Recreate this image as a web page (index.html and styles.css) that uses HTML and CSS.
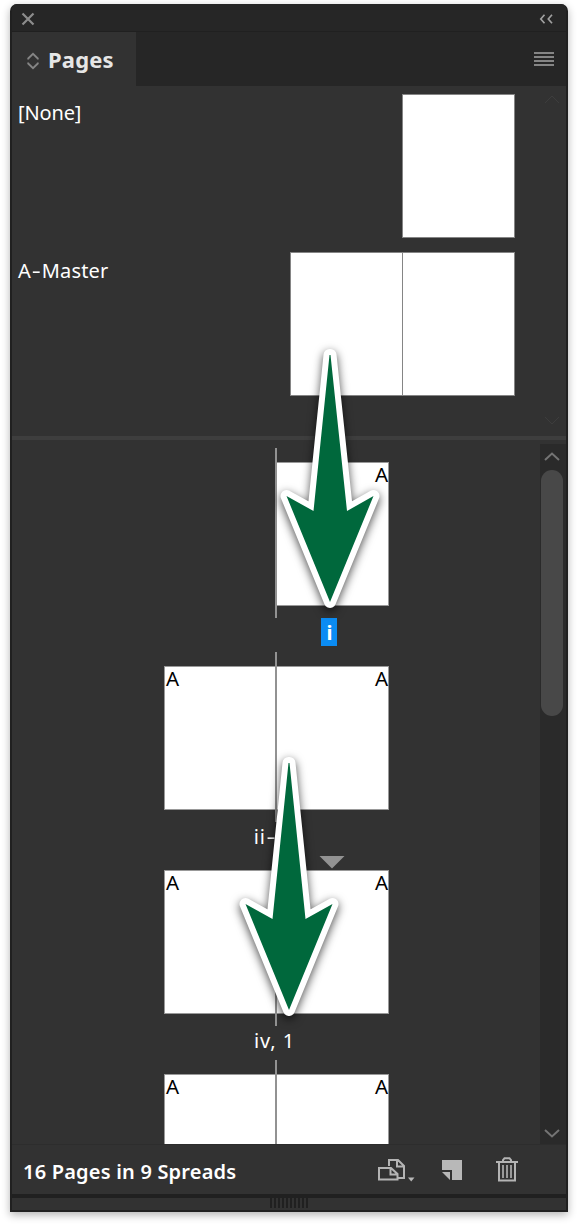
FILE: index.html
```
<!DOCTYPE html>
<html lang="en">
<head>
<meta charset="utf-8">
<title>Pages</title>
<link rel="stylesheet" href="styles.css">
</head>
<body>
<main class="panel">
  <header class="titlebar">
    <svg class="close" width="14" height="14" viewBox="0 0 14 14"><path d="M1.5 1.5L12.5 12.5M12.5 1.5L1.5 12.5"/></svg>
    <svg class="collapse" width="14" height="10" viewBox="0 0 14 10"><path d="M5.5 .8L1.8 5L5.5 9.2M13 .8L9.3 5L13 9.2"/></svg>
  </header>
  <nav class="tabs">
    <div class="tab">
      <svg class="sort" width="12" height="18" viewBox="0 0 12 18"><path d="M1.2 7.5V6.5L6 1.8L10.8 6.5V7.5M1.2 10.5V11.5L6 16.2L10.8 11.5V10.5"/></svg>
      <span class="tab-name">Pages</span>
    </div>
    <svg class="menu" width="20" height="14" viewBox="0 0 20 14"><path d="M0 1H20M0 5H20M0 9H20M0 13H20"/></svg>
  </nav>
  <section class="masters">
    <div class="master-list">
      <div class="master"><span class="name">[None]</span><div class="sheets"><div class="sheet"></div></div></div>
      <div class="master"><span class="name wide">A<span class="hyphen">-</span>Master</span><div class="sheets"><div class="sheet"></div><div class="sheet joined"></div></div></div>
    </div>
    <div class="faint-scroll">
      <svg width="16" height="9" viewBox="0 0 16 9"><path d="M1 8L8 1L15 8"/></svg>
      <svg width="16" height="9" viewBox="0 0 16 9"><path d="M1 1L8 8L15 1"/></svg>
    </div>
  </section>
  <div class="divider"></div>
  <section class="document">
    <div class="spreads">
      <div class="spread">
        <div class="pair"><div class="blank"></div><div class="page right">A</div></div>
        <div class="label single"><span class="selected">i</span></div>
        <i class="spine"></i>
      </div>
      <div class="spread">
        <div class="pair"><div class="page">A</div><div class="page right">A</div></div>
        <div class="label">ii<span class="hyphen">-</span>iii</div>
        <i class="spine"></i>
      </div>
      <div class="spread">
        <div class="pair"><div class="page">A</div><div class="page right">A</div></div>
        <div class="label">iv, 1</div>
        <i class="spine"></i>
        <svg class="marker" width="26" height="13" viewBox="0 0 26 13"><path d="M.5 0H25.5L13 12.5Z"/></svg>
      </div>
      <div class="spread">
        <div class="pair"><div class="page">A</div><div class="page right">A</div></div>
        <i class="spine"></i>
      </div>
    </div>
    <div class="scrollbar">
      <svg width="16" height="9" viewBox="0 0 16 9"><path d="M1 8L8 1.5L15 8"/></svg>
      <div class="thumb"></div>
      <svg class="down" width="16" height="9" viewBox="0 0 16 9"><path d="M1 1L8 7.5L15 1"/></svg>
    </div>
  </section>
  <footer class="footer">
    <span class="count">16 Pages in 9 Spreads</span>
    <svg class="size" width="38" height="24" viewBox="0 0 38 24"><path class="line" d="M11 8V2H20L26 8V20H20M19 2V8.5H26M1 10H13L19.5 16V21.5H1ZM12.5 10V16.5H19.5"/><path class="solid" d="M30 19.5H36.5L33.2 23.5Z"/></svg>
    <svg class="new" width="20" height="20" viewBox="0 0 20 20"><path class="solid" d="M0 0H20V20H10V10H0ZM0 12H8V20Z"/></svg>
    <svg class="trash" width="22" height="25" viewBox="0 0 22 25"><path class="line" d="M0 5H22M7 5V3L8.5 1.2H13.5L15 3V5M3 5V23.5H19V5"/><path class="bars" d="M7 8V21M11 8V21M15 8V21"/></svg>
  </footer>
  <div class="grip"><div class="ridges"></div></div>
</main>
<svg class="arrows" width="578" height="1226" viewBox="0 0 578 1226">
  <path d="M329.5 355H330.5L347 511L373.5 496L330 602L286.5 496L313.5 511Z"/>
  <path d="M288.5 763H289.5L305.5 919L332.5 904L289 1010L245.5 904L272.5 919Z"/>
</svg>
</body>
</html>
```
FILE: styles.css
```
* { box-sizing: border-box; }
body { margin: 0; padding: 4px 10px 14px; height: 1226px; overflow: hidden; background: #fff; font-family: "Noto Sans", "Open Sans", sans-serif; font-size: 20px; color: #fff; }
svg { display: block; fill: none; }
.panel { width: 558px; height: 1208px; display: flex; flex-direction: column; background: #323232; border: solid #202020; border-width: 0 2px 2px; border-radius: 7px 7px 0 0; overflow: hidden; box-shadow: 0 3px 9px rgba(0,0,0,.3); }
.titlebar { height: 28px; flex: none; display: flex; justify-content: space-between; align-items: center; padding: 3px 13px 0 9px; background: #262626; border-bottom: 1px solid #202020; }
.close { stroke: #8c8c8c; stroke-width: 2.2; }
.collapse { stroke: #a0a0a0; stroke-width: 1.7; }
.tabs { height: 54px; flex: none; display: flex; justify-content: space-between; align-items: center; padding-right: 12px; background: #262626; }
.tab { width: 124px; height: 54px; display: flex; align-items: center; padding: 3px 0 0 15px; gap: 9px; background: #323232; }
.tab-name { font-weight: 700; font-size: 22px; line-height: 30px; margin-top: -4px; color: #e6e6e6; letter-spacing: .15px; }
.sort { stroke: #858585; stroke-width: 1.8; }
.menu { stroke: #858585; stroke-width: 2; }
.masters { height: 350px; flex: none; display: flex; justify-content: space-between; padding: 8px 6px 0; }
.master-list { width: 497px; display: flex; flex-direction: column; gap: 14px; }
.master { height: 144px; display: flex; justify-content: space-between; }
.name { padding-top: 6px; line-height: 26px; letter-spacing: -.15px; }
.wide { letter-spacing: .2px; }
.hyphen { display: inline-block; transform: scaleX(1.4); margin: 0 2px; }
.sheets { display: flex; }
.sheet { width: 113px; height: 144px; background: #fff; border: 1px solid #858585; }
.joined { width: 112px; border-left: 0; }
.faint-scroll { height: 332px; display: flex; flex-direction: column; justify-content: space-between; stroke: #3d3d3d; padding: 1px 0; }
.divider { height: 4px; flex: none; background: #3e3e3e; }
.document { height: 704px; flex: none; display: flex; justify-content: space-between; overflow: hidden; }
.spreads { width: 529px; padding-top: 8px; height: 704px; overflow: hidden; }
.spread { height: 204px; padding: 14px 0 0 152px; position: relative; }
.pair { width: 225px; display: flex; }
.page { width: 112px; height: 144px; background: #fff; border: 1px solid #999; color: #000; padding: 0 1px; line-height: 23px; font-size: 20.5px; }
.right, .blank { width: 113px; }
.blank { width: 112px; height: 144px; }
.right { text-align: right; padding-right: 0; }
.spine { position: absolute; left: 263px; top: 0; width: 2px; height: 170px; background: #929292; }
.label { margin-top: 12px; width: 221px; height: 28px; line-height: 30px; text-align: center; letter-spacing: .9px; }
.single { width: 330px; }
.selected { display: block; width: 16px; height: 28px; margin-left: 157px; background: #0b8cf3; font-weight: 700; letter-spacing: 0; padding-left: 1px; }
.marker { position: absolute; left: 307px; top: 0; fill: #929292; }
.scrollbar { width: 26px; padding: 8px 2px 6px 0; margin-top: 4px; height: 700px; display: flex; flex-direction: column; align-items: center; background: #2a2a2a; stroke: #747474; stroke-width: 2; }
.thumb { width: 22px; height: 246px; margin-top: 9px; border-radius: 11px; background: #484848; }
.down { margin-top: auto; }
.footer { height: 50px; flex: none; display: flex; align-items: center; padding: 0 48px 0 11px; border-top: 1px solid #2d2d2d; }
.count { width: 355px; font-weight: 600; font-size: 20px; letter-spacing: .2px; white-space: nowrap; padding-top: 3px; }
.line { stroke: #b4b4b4; stroke-width: 2; }
.bars { stroke: #b4b4b4; stroke-width: 1.6; }
.solid { fill: #b8b8b8; }
.new { margin-left: 26px; }
.trash { margin-left: auto; }
.grip { flex: 1; border-top: 4px solid #202020; display: flex; justify-content: center; }
.ridges { width: 39px; height: 10px; background: repeating-linear-gradient(90deg, #202020 0 2px, #323232 2px 4px); }
.arrows { position: absolute; left: 0; top: 0; fill: #00683c; stroke: #fff; stroke-width: 12px; stroke-linejoin: round; paint-order: stroke; filter: drop-shadow(0 3px 5px rgba(0,0,0,.7)); }
```
